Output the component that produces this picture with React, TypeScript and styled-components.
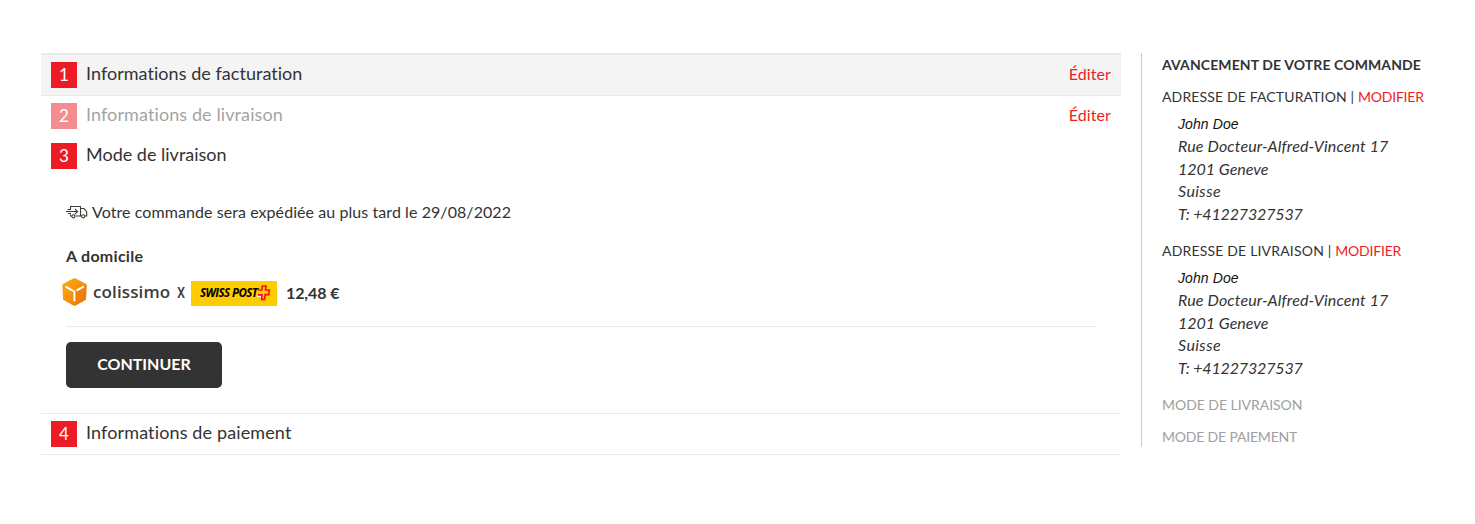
import React from 'react';
import styled, { createGlobalStyle, css } from 'styled-components';

const RED = '#ed1c24';
const DARK = '#333';

const GlobalStyle = createGlobalStyle`
  * { box-sizing: border-box; }
  body {
    margin: 0;
    background: #fff;
    color: ${DARK};
    font-family: Lato, "Liberation Sans", sans-serif;
    font-size: 16px;
  }
`;

const Page = styled.div`
  display: flex;
  align-items: flex-start;
  gap: 20px;
  padding: 53px 41px 0;
  height: 524px;
`;

const Steps = styled.main`
  width: 1080px;
  flex: none;
`;

const StepHeader = styled.header<{ $variant?: 'done' | 'closed' }>`
  display: flex;
  align-items: center;
  height: 40px;
  padding: 0 10px;
  ${(p) =>
    p.$variant === 'done' &&
    css`
      height: 43px;
      background: #f4f4f4;
      border-top: 2px solid #eaeaea;
      border-bottom: 1px solid #eaeaea;
    `}
  ${(p) =>
    p.$variant === 'closed' &&
    css`
      height: 42px;
      border-top: 1px solid #eaeaea;
      border-bottom: 1px solid #eaeaea;
    `}
`;

const StepNumber = styled.span<{ $dim?: boolean }>`
  width: 26px;
  height: 26px;
  background: ${RED};
  color: #fff;
  font-size: 17px;
  line-height: 25px;
  text-align: center;
  opacity: ${(p) => (p.$dim ? 0.5 : 1)};
`;

const StepTitle = styled.h2<{ $dim?: boolean; $spacing?: number }>`
  flex: 1;
  margin: 0 0 0 9px;
  padding-bottom: 4px;
  font-size: 18px;
  line-height: 22px;
  font-weight: 400;
  letter-spacing: ${(p) => p.$spacing ?? 0.04}px;
  opacity: ${(p) => (p.$dim ? 0.45 : 1)};
`;

const EditLink = styled.a`
  padding-bottom: 2px;
  color: ${RED};
  line-height: 20px;
  letter-spacing: 0.1px;
`;

const StepBody = styled.section`
  height: 237px;
  padding: 26px 25px 0;
`;

const Notice = styled.p`
  display: flex;
  align-items: center;
  gap: 4px;
  height: 20px;
  margin: 0;
  line-height: 20px;
  letter-spacing: 0.07px;
`;

const MethodTitle = styled.h3`
  margin: 24px 0 0;
  font-size: 16px;
  line-height: 20px;
  letter-spacing: 0.28px;
`;

const MethodRow = styled.div`
  display: flex;
  align-items: center;
  height: 30px;
  margin: 12px 0 18px -4px;
`;

const ColissimoName = styled.span`
  width: 84px;
  margin-left: 6px;
  padding-bottom: 3px;
  color: #3c3c3b;
  font-family: "Open Sans", sans-serif;
  font-size: 17px;
  font-weight: 600;
  line-height: 22px;
  letter-spacing: 0.12px;
`;

const Times = styled.span`
  width: 14px;
  color: #3c3c3b;
  font: 500 15px/20px Roboto, sans-serif;
  transform: scaleX(0.85);
  transform-origin: left;
`;

const SwissPost = styled.span`
  display: flex;
  align-items: center;
  width: 86px;
  height: 25px;
  padding-left: 9px;
  background: #fc0;
`;

const SwissPostName = styled.span`
  width: 57px;
  color: #000;
  font: italic 700 11.5px/14px "Open Sans", sans-serif;
  letter-spacing: -0.55px;
  white-space: nowrap;
`;

const Price = styled.strong`
  margin-left: 9px;
  line-height: 20px;
  letter-spacing: -0.1px;
`;

const Divider = styled.hr`
  height: 1px;
  margin: 0 0 15px;
  border: 0;
  background: #ebebeb;
`;

const ContinueButton = styled.button`
  display: block;
  width: 156px;
  height: 46px;
  padding: 0 0 2px;
  border: 0;
  border-radius: 5px;
  background: ${DARK};
  color: #fff;
  font: 700 16px/20px Lato, sans-serif;
`;

const Progress = styled.aside`
  width: 300px;
  height: 394px;
  padding-left: 20px;
  border-left: 1px solid #ccc;
`;

const ProgressTitle = styled.h2`
  margin: 2px 0 0;
  font-size: 14px;
  line-height: 20px;
  letter-spacing: 0.11px;
  white-space: nowrap;
`;

const ProgressHeading = styled.h3<{ $dim?: boolean; $spacing: number }>`
  margin: 12px 0 0;
  color: ${(p) => (p.$dim ? '#a0a0a0' : DARK)};
  font-size: 14px;
  font-weight: 400;
  line-height: 20px;
  letter-spacing: ${(p) => p.$spacing}px;
  white-space: nowrap;
`;

const ModifyLink = styled.a`
  color: ${RED};
  letter-spacing: -0.2px;
`;

const Address = styled.address`
  margin: 6px 0 16px 16px;
  line-height: 22.5px;
`;

const Recipient = styled.div`
  color: #111;
  font: italic 14px/22px "Liberation Sans", sans-serif;
  letter-spacing: 0.1px;
`;

const AddressLine = styled.div<{ $spacing: number }>`
  letter-spacing: ${(p) => p.$spacing}px;
`;

const TruckIcon = () => (
  <svg width="22" height="14" viewBox="0 0 22 14" fill="none" stroke="#3d3a38" strokeWidth="1.1">
    <path d="M4.5 4V1.5h10V11h-5M4.5 9.5V11h1M14.5 3.5h3.6l2.6 3.4V11h-1.6M15.4 11h-.9" />
    <path d="M1.5 4.5H5M0 6.5h11M2 8.5h3M8.8 3.8 11.6 6.5 8.8 9.2" />
    <circle cx="7.4" cy="11.3" r="1.6" />
    <circle cx="17.2" cy="11.3" r="1.6" />
  </svg>
);

const BoxSvg = styled.svg`
  margin-bottom: 2px;
`;

const ColissimoIcon = () => (
  <BoxSvg width="25" height="28" viewBox="0 0 25 28">
    <defs>
      <linearGradient id="boxShade" x1="0" y1="0" x2="1" y2="1">
        <stop offset="0" stopColor="#fbb013" />
        <stop offset="1" stopColor="#ee7203" />
      </linearGradient>
    </defs>
    <path
      d="M11.9.3Q12.5 0 13.1.3L24.2 6Q24.7 6.3 24.7 7L24 20.9Q24 21.5 23.4 21.9L13.1 27.7Q12.5 28 11.9 27.7L1.6 21.9Q1 21.5 1 20.9L.3 7Q.3 6.3.8 6Z"
      fill="url(#boxShade)"
    />
    <path d="M13 13.4 24.7 6.8 24 20.9Q24 21.5 23.4 21.9L13 27.7Z" fill="#ee7a0a" opacity=".5" />
    <path d="M3.6 8.6 12.4 13.6V23.3M14.3 12.6 22 8.3" fill="none" stroke="#fff" strokeWidth="1.9" />
  </BoxSvg>
);

const SwissCross = () => (
  <svg width="14" height="16" viewBox="0 0 14 16" fill="none">
    <path d="M0 11.4H4M3.8 11.4V14.8" stroke="#fff" strokeWidth="1.2" />
    <path
      d="M.9 5H4.9L5.4 1H9L8.5 5H12.4L11.7 9.6H8.2L7.6 14.4H4.4L5 9.8H1"
      stroke="#f01414"
      strokeWidth="1.7"
    />
  </svg>
);

const addressLines: [string, number][] = [
  ['Rue Docteur-Alfred-Vincent 17', 0.14],
  ['1201 Geneve', 0],
  ['Suisse', 0.4],
  ['T: +41227327537', -0.15],
];

const CustomerAddress = () => (
  <Address>
    <Recipient>John Doe</Recipient>
    {addressLines.map(([text, spacing]) => (
      <AddressLine key={text} $spacing={spacing}>
        {text}
      </AddressLine>
    ))}
  </Address>
);

export default function App() {
  return (
    <>
      <GlobalStyle />
      <Page>
        <Steps>
          <StepHeader $variant="done">
            <StepNumber>1</StepNumber>
            <StepTitle>Informations de facturation</StepTitle>
            <EditLink>Éditer</EditLink>
          </StepHeader>
          <StepHeader>
            <StepNumber $dim>2</StepNumber>
            <StepTitle $dim $spacing={0.1}>Informations de livraison</StepTitle>
            <EditLink>Éditer</EditLink>
          </StepHeader>
          <StepHeader>
            <StepNumber>3</StepNumber>
            <StepTitle $spacing={0}>Mode de livraison</StepTitle>
          </StepHeader>
          <StepBody>
            <Notice>
              <TruckIcon />
              Votre commande sera expédiée au plus tard le 29/08/2022
            </Notice>
            <MethodTitle>A domicile</MethodTitle>
            <MethodRow>
              <ColissimoIcon />
              <ColissimoName>colissimo</ColissimoName>
              <Times>X</Times>
              <SwissPost>
                <SwissPostName>SWISS POST</SwissPostName>
                <SwissCross />
              </SwissPost>
              <Price>12,48 €</Price>
            </MethodRow>
            <Divider />
            <ContinueButton>CONTINUER</ContinueButton>
          </StepBody>
          <StepHeader $variant="closed">
            <StepNumber>4</StepNumber>
            <StepTitle $spacing={0.13}>Informations de paiement</StepTitle>
          </StepHeader>
        </Steps>
        <Progress>
          <ProgressTitle>AVANCEMENT DE VOTRE COMMANDE</ProgressTitle>
          <ProgressHeading $spacing={0.14}>
            ADRESSE DE FACTURATION | <ModifyLink>MODIFIER</ModifyLink>
          </ProgressHeading>
          <CustomerAddress />
          <ProgressHeading $spacing={0.18}>
            ADRESSE DE LIVRAISON | <ModifyLink>MODIFIER</ModifyLink>
          </ProgressHeading>
          <CustomerAddress />
          <ProgressHeading $dim $spacing={-0.04}>MODE DE LIVRAISON</ProgressHeading>
          <ProgressHeading $dim $spacing={-0.18}>MODE DE PAIEMENT</ProgressHeading>
        </Progress>
      </Page>
    </>
  );
}
